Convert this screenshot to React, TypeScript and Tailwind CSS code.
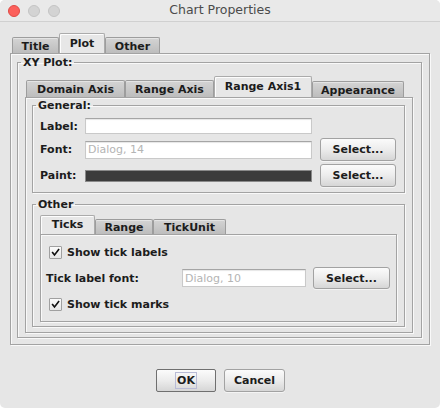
import React from "react";

const etched =
  "border border-[#a3a3a3] shadow-[inset_1px_1px_0_#f9f9f9,1px_1px_0_#f9f9f9]";

function Tab({
  label,
  selected,
  className,
}: {
  label: string;
  selected?: boolean;
  className: string;
}) {
  return (
    <div
      className={`${className} flex items-center justify-center font-bold text-[11px] leading-none text-[#1c1c1c] border border-b-0 rounded-t-[2px] ${
        selected
          ? "bg-[#e7e7e7] border-[#ababab] shadow-[inset_1px_1px_0_#fdfdfd] pb-[1px]"
          : "bg-gradient-to-b from-[#d4d4d4] to-[#bdbdbd] border-[#9d9d9d] shadow-[inset_0_1px_0_#e4e4e4] pt-[1px]"
      }`}
    >
      {label}
    </div>
  );
}

function Button({ children, className }: { children: React.ReactNode; className: string }) {
  return (
    <div
      className={`${className} flex items-center justify-center font-bold text-[11px] leading-none text-[#1c1c1c] bg-gradient-to-b from-[#fbfbfb] via-[#ececec] to-[#d6d6d6] border border-[#a2a2a2] rounded-[3px] shadow-[0_1px_0_#f4f4f4]`}
    >
      {children}
    </div>
  );
}

function Check() {
  return (
    <div className="w-[13px] h-[13px] shrink-0 flex items-center justify-center bg-gradient-to-b from-[#fbfbfb] to-[#e6e6e6] border border-[#a0a0a0] rounded-[1px]">
      <svg width="9" height="9" viewBox="0 0 9 9">
        <path d="M1.6 4.6 L3.5 7 L7.6 1.6" fill="none" stroke="#111" strokeWidth="1.6" strokeLinecap="square" />
      </svg>
    </div>
  );
}

const legendCls = "ml-[3px] px-[2px] font-bold text-[11px] leading-[13px] text-[#1c1c1c]";
const fieldCls =
  "bg-white border border-[#c9c9c9] border-t-[#a5a5a5] shadow-[inset_0_1px_1px_rgba(0,0,0,0.10)]";

export default function App() {
  return (
    <div className="w-[440px] h-[408px] bg-[#e6e6e6] flex flex-col font-['DejaVu_Sans',sans-serif] text-[#1c1c1c] overflow-hidden rounded-[5px]">
      {/* Title bar */}
      <div className="h-[22px] shrink-0 flex items-center bg-[#e9e9e9] border-b border-[#d0d0d0]">
        <div className="w-[80px] flex items-center gap-[8px] pl-[8px]">
          <span className="w-[12px] h-[12px] rounded-full bg-[#fc605b] border border-[#de4a45]" />
          <span className="w-[12px] h-[12px] rounded-full bg-[#d3d3d3] border border-[#c3c3c3]" />
          <span className="w-[12px] h-[12px] rounded-full bg-[#d3d3d3] border border-[#c3c3c3]" />
        </div>
        <div className="flex-1 text-center text-[12.5px] leading-none text-[#4b4b4b]">Chart Properties</div>
        <div className="w-[80px]" />
      </div>

      {/* Body */}
      <div className="pt-[11px] pl-[10px] flex flex-col">
        <div className="w-[420px]">
          <div className="flex items-end pl-[2px] h-[20px]">
            <Tab label="Title" className="w-[47px] h-[16px]" />
            <Tab label="Plot" selected className="w-[46px] h-[20px]" />
            <Tab label="Other" className="w-[55px] h-[16px]" />
          </div>
          <div className={`h-[292px] ${etched} pl-[6px] pt-[2px]`}>
            <fieldset className={`w-[405px] ${etched} p-0 m-0`}>
              <legend className={legendCls}>XY Plot:</legend>
              <div className="pl-[7px] pt-[7px] pb-[4px]">
                <div className="flex items-end pl-[1px] h-[21px]">
                  <Tab label="Domain Axis" className="w-[99px] h-[17px]" />
                  <Tab label="Range Axis" className="w-[89px] h-[17px]" />
                  <Tab label="Range Axis1" selected className="w-[98px] h-[21px]" />
                  <Tab label="Appearance" className="w-[92px] h-[16px]" />
                </div>
                <div className={`w-[388px] h-[236px] ${etched} pl-[6px] pt-[1px]`}>
                  {/* General */}
                  <fieldset className={`w-[373px] ${etched} p-0 m-0`}>
                    <legend className={legendCls}>General:</legend>
                    <div className="pt-[6px] pl-[7px] pr-[8px] pb-[5px] flex flex-col">
                      <div className="flex items-center h-[16px]">
                        <div className="w-[45px] font-bold text-[11px] leading-none">Label:</div>
                        <div className={`w-[227px] h-[16px] ${fieldCls}`} />
                      </div>
                      <div className="flex items-center h-[23px] mt-[4px]">
                        <div className="w-[45px] font-bold text-[11px] leading-none">Font:</div>
                        <div className={`w-[227px] h-[18px] ${fieldCls} flex items-center pl-[2px] text-[11px] leading-none text-[#b4b4b4]`}>
                          Dialog, 14
                        </div>
                        <Button className="ml-[8px] w-[76px] h-[23px]">Select...</Button>
                      </div>
                      <div className="flex items-center h-[23px] mt-[3px]">
                        <div className="w-[45px] font-bold text-[11px] leading-none">Paint:</div>
                        <div className="w-[227px] h-[12px] bg-[#3c3c3c] border border-[#8a8a8a]" />
                        <Button className="ml-[8px] w-[76px] h-[23px]">Select...</Button>
                      </div>
                    </div>
                  </fieldset>

                  {/* Other */}
                  <fieldset className={`w-[373px] mt-[5px] ${etched} p-0 m-0`}>
                    <legend className={legendCls}>Other</legend>
                    <div className="pt-[4px] pl-[7px] pr-[7px] pb-[4px]">
                      <div className="flex items-end h-[19px]">
                        <Tab label="Ticks" selected className="w-[55px] h-[19px]" />
                        <Tab label="Range" className="w-[58px] h-[15px]" />
                        <Tab label="TickUnit" className="w-[73px] h-[15px]" />
                      </div>
                      <div className={`w-[357px] h-[88px] ${etched} pl-[5px] pt-[11px] flex flex-col`}>
                        <div className="flex items-center h-[13px] ml-[3px] gap-[5px]">
                          <Check />
                          <span className="font-bold text-[11px] leading-none">Show tick labels</span>
                        </div>
                        <div className="flex items-center h-[22px] mt-[8px]">
                          <div className="w-[136px] font-bold text-[11px] leading-none">Tick label font:</div>
                          <div className={`w-[124px] h-[18px] ${fieldCls} flex items-center pl-[2px] text-[11px] leading-none text-[#b4b4b4]`}>
                            Dialog, 10
                          </div>
                          <Button className="ml-[7px] w-[77px] h-[22px]">Select...</Button>
                        </div>
                        <div className="flex items-center h-[13px] mt-[9px] ml-[3px] gap-[5px]">
                          <Check />
                          <span className="font-bold text-[11px] leading-none">Show tick marks</span>
                        </div>
                      </div>
                    </div>
                  </fieldset>
                </div>
              </div>
            </fieldset>
          </div>
        </div>
      </div>

      {/* Buttons */}
      <div className="mt-[24px] flex justify-center gap-[8px] pl-[1px]">
        <div className="w-[60px] h-[23px] flex items-center justify-center font-bold text-[11px] leading-none text-[#1c1c1c] bg-gradient-to-b from-[#fbfbfb] via-[#ececec] to-[#d6d6d6] border border-[#6f6f6f] rounded-[2px]">
          <span className="border border-[#b9bbd6] px-[1px] py-[2px]">OK</span>
        </div>
        <Button className="w-[61px] h-[23px]">Cancel</Button>
      </div>
    </div>
  );
}
